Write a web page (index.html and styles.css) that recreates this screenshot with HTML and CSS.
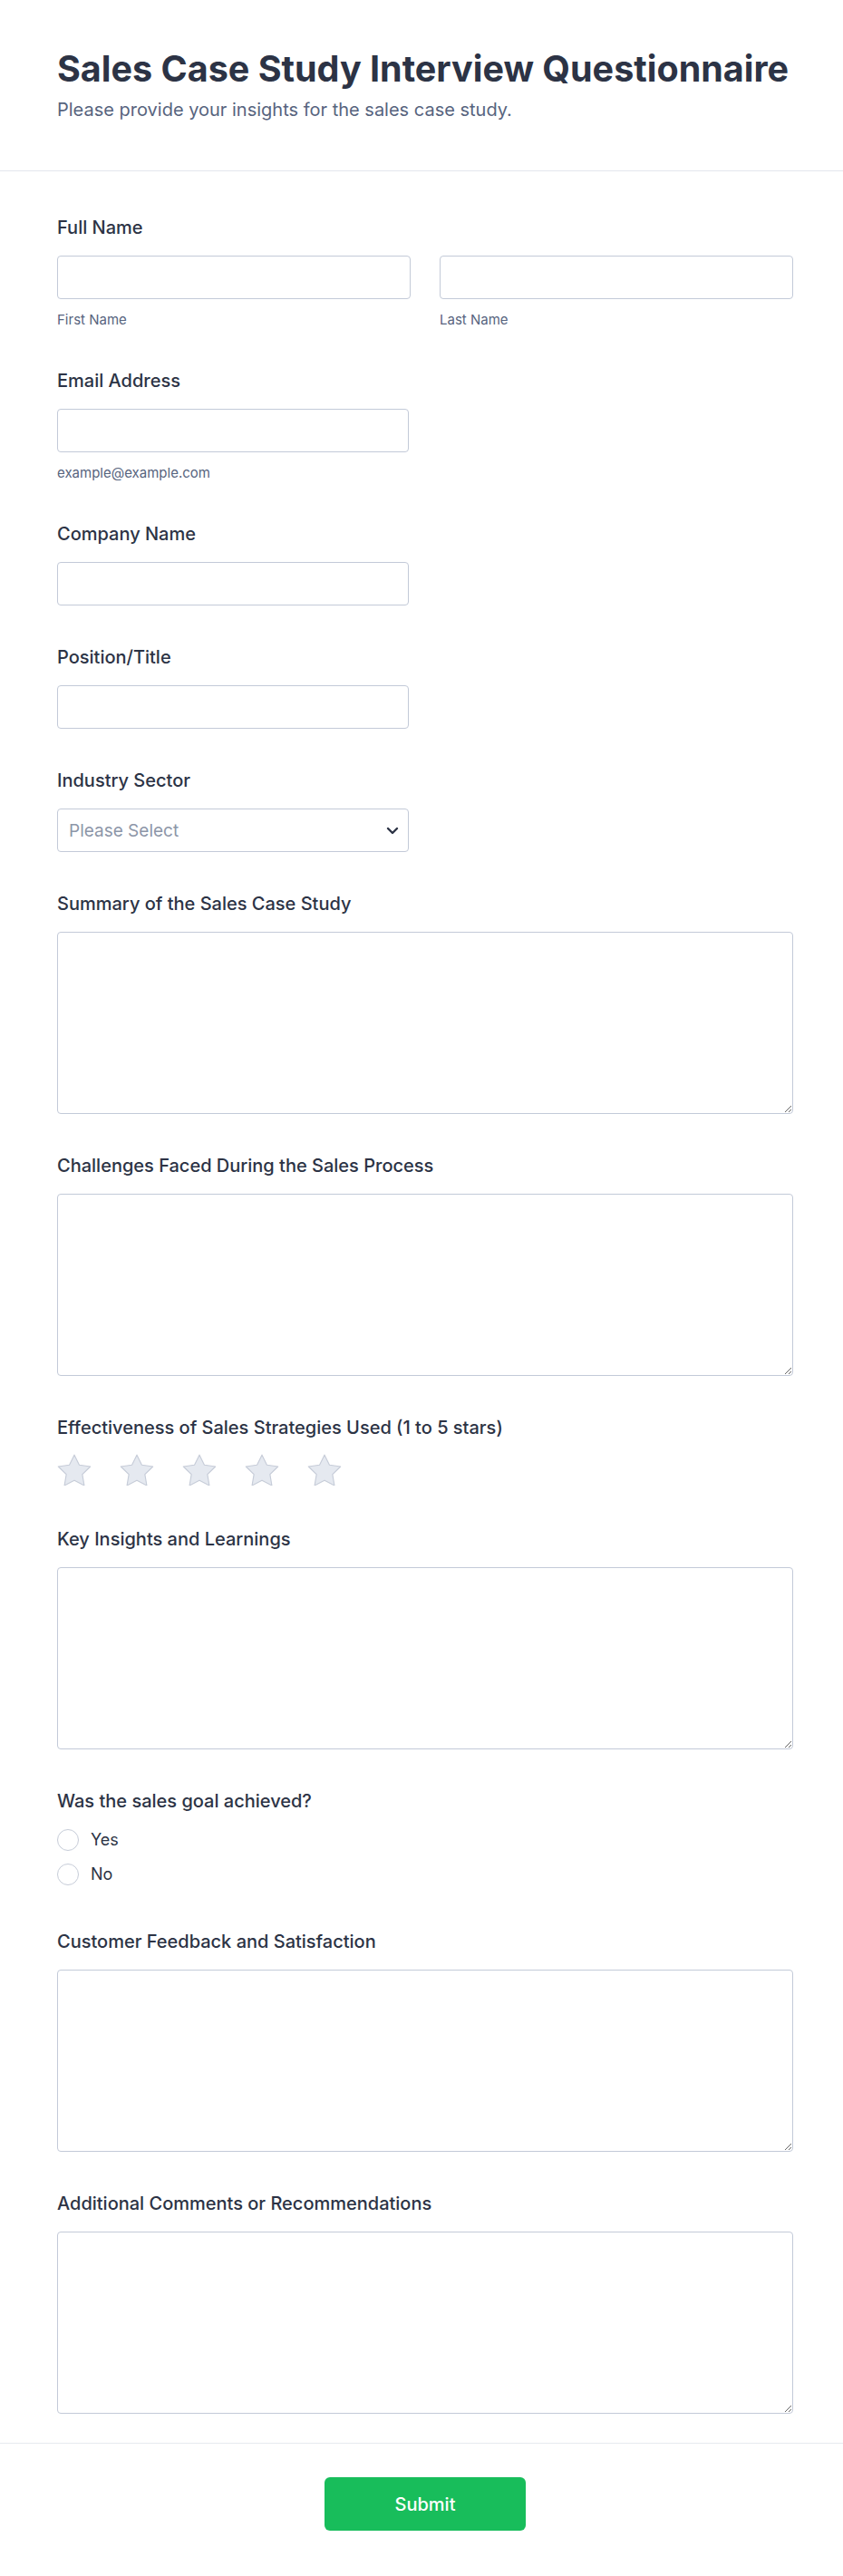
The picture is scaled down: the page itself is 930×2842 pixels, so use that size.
FILE: index.html
```html
<!DOCTYPE html>
<html lang="en">
<head>
    <meta charset="UTF-8">
    <meta name="viewport" content="width=device-width, initial-scale=1.0">
    <title>Sales Case Study Interview Questionnaire</title>
    <link rel="stylesheet" href="styles.css">
</head>
<body>
    <header class="form-header">
        <h1>Sales Case Study Interview Questionnaire</h1>
        <p>Please provide your insights for the sales case study.</p>
    </header>

    <form class="form-body">
        <div class="field">
            <label class="field-label">Full Name</label>
            <div class="name-row">
                <div class="name-part">
                    <input type="text" id="first-name">
                    <span class="sublabel">First Name</span>
                </div>
                <div class="name-part">
                    <input type="text" id="last-name">
                    <span class="sublabel">Last Name</span>
                </div>
            </div>
        </div>

        <div class="field">
            <label class="field-label" for="email">Email Address</label>
            <input type="email" id="email" class="half">
            <span class="sublabel">example@example.com</span>
        </div>

        <div class="field">
            <label class="field-label" for="company">Company Name</label>
            <input type="text" id="company" class="half">
        </div>

        <div class="field">
            <label class="field-label" for="position">Position/Title</label>
            <input type="text" id="position" class="half">
        </div>

        <div class="field">
            <label class="field-label" for="industry">Industry Sector</label>
            <div class="select-wrap half">
                <select id="industry">
                    <option>Please Select</option>
                </select>
                <svg class="select-arrow" width="14" height="9" viewBox="0 0 14 9">
                    <path d="M2 2l5 5 5-5" fill="none" stroke="#2c3345" stroke-width="2.4" stroke-linecap="round" stroke-linejoin="round"/>
                </svg>
            </div>
        </div>

        <div class="field">
            <label class="field-label" for="summary">Summary of the Sales Case Study</label>
            <textarea id="summary"></textarea>
        </div>

        <div class="field">
            <label class="field-label" for="challenges">Challenges Faced During the Sales Process</label>
            <textarea id="challenges"></textarea>
        </div>

        <div class="field">
            <label class="field-label">Effectiveness of Sales Strategies Used (1 to 5 stars)</label>
            <div class="stars">
                <svg class="star" viewBox="2 2 20 18.6"><path d="M12 2.6l2.9 5.9 6.5.95-4.7 4.6 1.1 6.5L12 17.5l-5.8 3.05 1.1-6.5-4.7-4.6 6.5-.95z"/></svg>
                <svg class="star" viewBox="2 2 20 18.6"><path d="M12 2.6l2.9 5.9 6.5.95-4.7 4.6 1.1 6.5L12 17.5l-5.8 3.05 1.1-6.5-4.7-4.6 6.5-.95z"/></svg>
                <svg class="star" viewBox="2 2 20 18.6"><path d="M12 2.6l2.9 5.9 6.5.95-4.7 4.6 1.1 6.5L12 17.5l-5.8 3.05 1.1-6.5-4.7-4.6 6.5-.95z"/></svg>
                <svg class="star" viewBox="2 2 20 18.6"><path d="M12 2.6l2.9 5.9 6.5.95-4.7 4.6 1.1 6.5L12 17.5l-5.8 3.05 1.1-6.5-4.7-4.6 6.5-.95z"/></svg>
                <svg class="star" viewBox="2 2 20 18.6"><path d="M12 2.6l2.9 5.9 6.5.95-4.7 4.6 1.1 6.5L12 17.5l-5.8 3.05 1.1-6.5-4.7-4.6 6.5-.95z"/></svg>
            </div>
        </div>

        <div class="field">
            <label class="field-label" for="insights">Key Insights and Learnings</label>
            <textarea id="insights"></textarea>
        </div>

        <div class="field field-radio">
            <label class="field-label">Was the sales goal achieved?</label>
            <div class="radio-list">
                <label class="radio-item"><input type="radio" name="goal"><span>Yes</span></label>
                <label class="radio-item"><input type="radio" name="goal"><span>No</span></label>
            </div>
        </div>

        <div class="field">
            <label class="field-label" for="feedback">Customer Feedback and Satisfaction</label>
            <textarea id="feedback"></textarea>
        </div>

        <div class="field">
            <label class="field-label" for="comments">Additional Comments or Recommendations</label>
            <textarea id="comments"></textarea>
        </div>
    </form>

    <footer class="form-footer">
        <button type="submit">Submit</button>
    </footer>
</body>
</html>
```

FILE: styles.css
```css
body {
    margin: 0;
    font-family: Inter, "Noto Sans", sans-serif;
    color: #2c3345;
    background-color: #fff;
}
.form-header {
    padding: 53px 55px 53px 63px;
    border-bottom: 1px solid #e3e6ee;
}
.form-header h1 {
    margin: 0 0 7px;
    font-size: 39.5px;
    line-height: 1.2;
    font-weight: 700;
    color: #2c3345;
}
.form-header p {
    margin: 0;
    font-size: 20px;
    line-height: 28px;
    color: #57647e;
}
.form-body {
    padding: 49px 55px 32px 63px;
}
.field {
    display: flex;
    flex-direction: column;
    align-items: flex-start;
    margin-bottom: 44px;
}
.field:last-child {
    margin-bottom: 0;
}
.field-label {
    display: block;
    font-size: 20px;
    line-height: 27px;
    font-weight: 500;
    margin-bottom: 17px;
    color: #2c3345;
}
.name-row {
    display: grid;
    grid-template-columns: 1fr 1fr;
    gap: 32px;
    width: 100%;
}
.name-part {
    display: flex;
    flex-direction: column;
}
input[type="text"],
input[type="email"],
select,
textarea {
    box-sizing: border-box;
    height: 48px;
    width: 100%;
    border: 1px solid #c3cad8;
    border-radius: 4px;
    background-color: #fff;
    font-family: inherit;
    font-size: 19px;
    color: #2c3345;
    padding: 0 12px;
    margin: 0;
}
.field .half {
    width: 388px;
}
.sublabel {
    display: block;
    margin-top: 13px;
    font-size: 15px;
    line-height: 20px;
    color: #57647e;
}
.select-wrap {
    position: relative;
}
select {
    appearance: none;
    -webkit-appearance: none;
    color: #8d96a8;
}
.select-arrow {
    position: absolute;
    right: 11px;
    top: 20px;
    pointer-events: none;
}
textarea {
    height: 201px;
    padding: 10px 12px;
    resize: vertical;
}
.stars {
    display: flex;
    gap: 31px;
    margin-top: -2px;
    margin-bottom: 2px;
}
.star {
    width: 38px;
    height: 35px;
    fill: #e5e9f0;
    stroke: #c6ccd8;
    stroke-width: 0.6;
    stroke-linejoin: round;
}
.radio-list {
    display: flex;
    flex-direction: column;
    gap: 14px;
    margin-top: 0;
    margin-bottom: 5px;
}
.radio-item {
    display: flex;
    align-items: center;
    gap: 13px;
    font-size: 18px;
    line-height: 24px;
    color: #2c3345;
}
.radio-item input {
    appearance: none;
    -webkit-appearance: none;
    width: 24px;
    height: 24px;
    margin: 0;
    border: 1.5px solid #c6ccd8;
    border-radius: 50%;
    background-color: #fff;
}
.form-footer {
    border-top: 1px solid #e6e9ef;
    padding: 37px 55px 50px 63px;
    display: flex;
    justify-content: center;
}
button {
    width: 222px;
    height: 59px;
    border: none;
    border-radius: 6px;
    background-color: #18bd5b;
    color: #fff;
    font-family: inherit;
    font-size: 20px;
    font-weight: 500;
    cursor: pointer;
}
button:hover {
    background-color: #16aa52;
}
```
